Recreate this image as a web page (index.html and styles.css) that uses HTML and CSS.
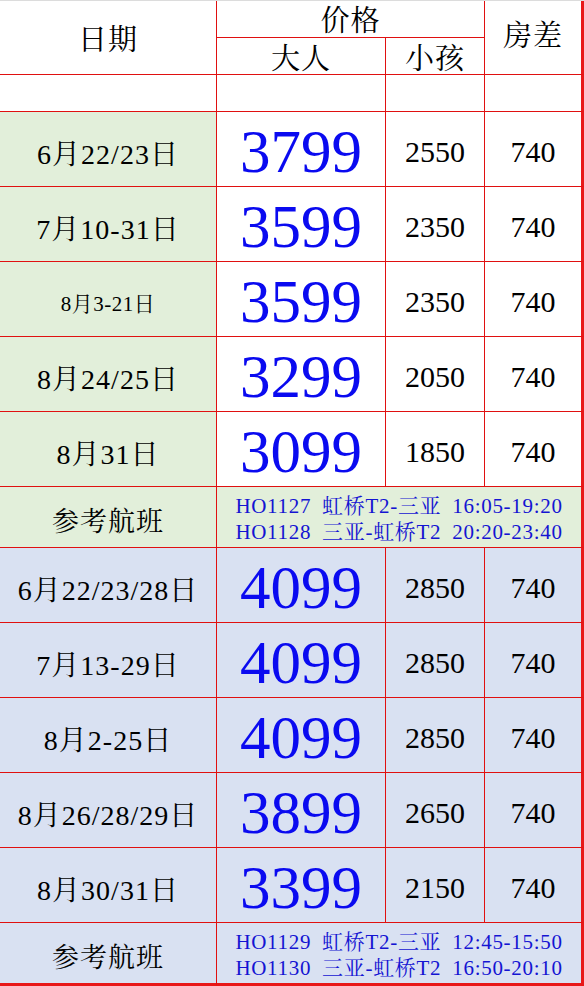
FILE: index.html
```html
<!DOCTYPE html>
<html lang="zh">
<head>
<meta charset="utf-8">
<title>价格表</title>
<link rel="stylesheet" href="styles.css">
</head>
<body>
<div class="sheet">
  <div class="c hd h-date">日期</div>
  <div class="c hd h-price">价格</div>
  <div class="c hd h-diff">房差</div>
  <div class="c hd h-adult">大人</div>
  <div class="c hd h-kid">小孩</div>

  <div class="c"></div><div class="c"></div><div class="c"></div><div class="c last"></div>

  <div class="c date green">6月22/23日</div><div class="c big">3799</div><div class="c num">2550</div><div class="c num last">740</div>
  <div class="c date green">7月10-31日</div><div class="c big">3599</div><div class="c num">2350</div><div class="c num last">740</div>
  <div class="c date green small">8月3-21日</div><div class="c big">3599</div><div class="c num">2350</div><div class="c num last">740</div>
  <div class="c date green">8月24/25日</div><div class="c big">3299</div><div class="c num">2050</div><div class="c num last">740</div>
  <div class="c date green">8月31日</div><div class="c big">3099</div><div class="c num">1850</div><div class="c num last">740</div>

  <div class="c label green">参考航班</div>
  <div class="c flight green last">HO1127 虹桥T2-三亚 16:05-19:20
HO1128 三亚-虹桥T2 20:20-23:40</div>

  <div class="c date blue">6月22/23/28日</div><div class="c big blue">4099</div><div class="c num blue">2850</div><div class="c num blue last">740</div>
  <div class="c date blue">7月13-29日</div><div class="c big blue">4099</div><div class="c num blue">2850</div><div class="c num blue last">740</div>
  <div class="c date blue">8月2-25日</div><div class="c big blue">4099</div><div class="c num blue">2850</div><div class="c num blue last">740</div>
  <div class="c date blue">8月26/28/29日</div><div class="c big blue">3899</div><div class="c num blue">2650</div><div class="c num blue last">740</div>
  <div class="c date blue">8月30/31日</div><div class="c big blue">3399</div><div class="c num blue">2150</div><div class="c num blue last">740</div>

  <div class="c label blue bottom">参考航班</div>
  <div class="c flight blue last bottom">HO1129 虹桥T2-三亚 12:45-15:50
HO1130 三亚-虹桥T2 16:50-20:10</div>
</div>
</body>
</html>
```

FILE: styles.css
```css
html, body {
  margin: 0;
  padding: 0;
  background: #ffffff;
}

.sheet {
  width: 584px;
  border-top: 1px solid #dcdcdc;
  display: grid;
  grid-template-columns: 217px 169px 99px 99px;
  grid-template-rows: 37px 37px 37px repeat(5, 75px) 61px repeat(5, 75px) 63px;
  font-family: "Liberation Serif", "Noto Serif CJK SC", "Noto Sans CJK SC", serif;
  color: #000;
}

.c {
  box-sizing: border-box;
  border-right: 1px solid #e01010;
  border-bottom: 1px solid #e01010;
  display: flex;
  align-items: center;
  justify-content: center;
  white-space: nowrap;
  background: #ffffff;
}

.last {
  border-right: 3px solid #e81818;
}

.bottom {
  border-bottom: 3px solid #e81818;
}

.hd {
  font-size: 29px;
  line-height: 1;
  letter-spacing: 1px;
}

.h-date {
  grid-column: 1;
  grid-row: 1 / span 2;
  padding-top: 6px;
}

.h-price {
  grid-column: 2 / span 2;
  grid-row: 1;
  padding-top: 4px;
}

.h-diff {
  grid-column: 4;
  grid-row: 1 / span 2;
  border-right: 3px solid #e81818;
  padding-bottom: 2px;
}

.h-adult {
  grid-column: 2;
  grid-row: 2;
  padding-top: 6px;
}

.h-kid {
  grid-column: 3;
  grid-row: 2;
  padding-top: 6px;
}

.green {
  background: #e2efda;
}

.blue {
  background: #d9e1f2;
}

.date {
  font-size: 28px;
  letter-spacing: 1px;
  padding-top: 5px;
}

.date.small {
  font-size: 21px;
  letter-spacing: 0.5px;
}

.big {
  font-size: 61px;
  color: #0a0af0;
  padding-top: 6px;
}

.num {
  font-size: 30px;
  padding-top: 5px;
}

.label {
  font-size: 27px;
  letter-spacing: 1px;
  padding-top: 4px;
}

.flight {
  grid-column: 2 / span 3;
  white-space: pre;
  font-size: 21px;
  line-height: 26px;
  letter-spacing: 0.7px;
  word-spacing: 5px;
  color: #1414d2;
  justify-content: center;
  padding-top: 3px;
}
```
